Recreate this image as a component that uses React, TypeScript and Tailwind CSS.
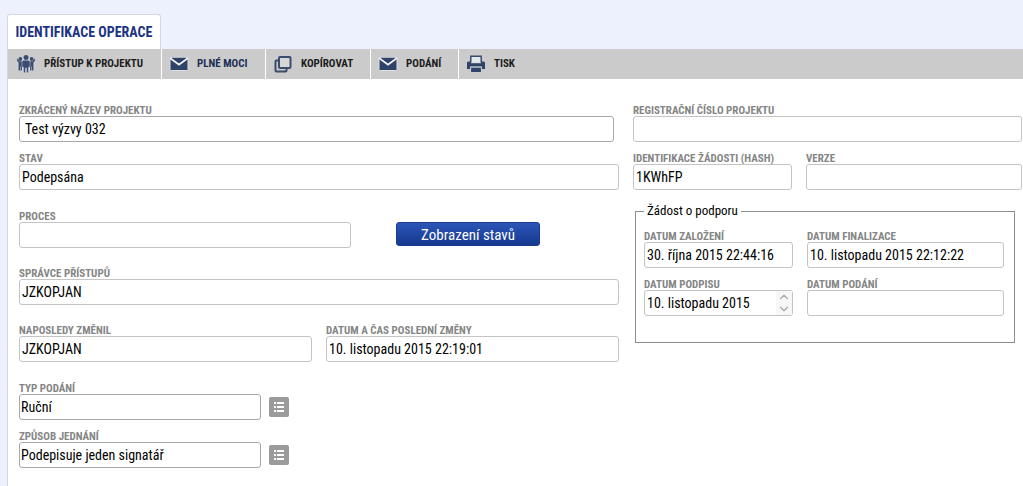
import { useId } from "react";
import { ChevronDown, ChevronUp } from "lucide-react";
import { clsx } from "clsx";

function PeopleIcon() {
    return (
        <svg viewBox="0 0 18 18" className="ml-px h-[18px] w-[18px] overflow-visible fill-[#3a4d6e]" aria-hidden="true">
            <path
                d="M3.200 3h11.600l2.800 2-.6 10.500h-4.500L12 18H6l-.5-2.500H1L.4 5Z"
                fill="#dcdfe4"
            />
            <circle cx="3.400" cy="4" r="1.900" />
            <circle cx="14.600" cy="4" r="1.900" />
            <path d="M.9 3.200-.2 5.400l1.700 2V15.600h1.500v-4h.5v4H5V6.200H2.200ZM17.100 3.200l1.100 2.200-1.700 2V15.600H15v-4h-.5v4H13V6.200h2.800Z" />
            <path
                d="M6.500 5.200h5q1.500 0 1.500 1.500v5.600h-1.400V17.800H9.400V13h-.8v4.800H6.400v-5.500H5V6.700q0-1.500 1.500-1.500Z"
                stroke="#dcdfe4"
                strokeWidth="0.500"
            />
            <circle cx="9" cy="2.600" r="2.500" />
        </svg>
    );
}

function MailIcon() {
    return (
        <svg viewBox="0 0 18 18" className="h-[18px] w-[18px] overflow-visible fill-[#2f4367]" aria-hidden="true">
            <rect y="2.500" width="18" height="13" rx="1" stroke="#dcdfe4" strokeWidth="1" />
            <path d="m0 3 9 6.500L18 3" fill="none" stroke="#eef1f6" strokeWidth="2" />
            <path d="M1.500 2.800h15L9 8.200Z" />
        </svg>
    );
}

function CopyIcon() {
    return (
        <svg viewBox="0 0 18 18" className="h-[18px] w-[18px]" fill="none" stroke="#3a4d6e" strokeWidth="2" aria-hidden="true">
            <path d="M5 5.500H2.500Q1.500 5.500 1.500 6.500V15.500q0 1 1 1H11.500q1 0 1-1V13" />
            <rect x="5" y="2" width="11.500" height="11" rx="1" fill="#d6d6d6" />
        </svg>
    );
}

function PrintIcon() {
    return (
        <svg viewBox="0 0 18 18" className="h-[18px] w-[18px] overflow-visible fill-[#2f4367]" aria-hidden="true">
            <path d="M3.800 7.500V1.200h10.400v6.300" fill="#e4e8ee" stroke="#3a4d6e" strokeWidth="1.500" />
            <path d="M1.400 6.500h2.400v1.700h10.400V6.500h2.400Q18 6.500 18 8v6h-3v-2.500H3V14H0V8q0-1.500 1.400-1.500Z" />
            <path d="M3.600 12.200h10.800v5.300H3.600Z" stroke="#dcdfe4" strokeWidth="0.800" />
        </svg>
    );
}

const toolbar = [
    { label: "PŘÍSTUP K PROJEKTU", icon: PeopleIcon, className: "w-[154px] text-[#1c1c1c]" },
    { label: "PLNÉ MOCI", icon: MailIcon, className: "w-[104px] text-[#1b2f55]" },
    { label: "KOPÍROVAT", icon: CopyIcon, className: "w-[105px] text-[#1c1c1c]" },
    { label: "PODÁNÍ", icon: MailIcon, className: "w-[88px] text-[#1c1c1c]" },
    { label: "TISK", icon: PrintIcon, className: "text-[#1c1c1c]" },
];

type FieldProps = {
    label: string;
    value?: string;
    className?: string;
    inputClassName?: string;
    spinner?: boolean;
};

function Field({ label, value = "", className, inputClassName = "border-[#c4c4c4] px-[2px]", spinner }: FieldProps) {
    const id = useId();

    return (
        <div className={clsx("min-w-0", className)}>
            <label htmlFor={id} className="block h-3 whitespace-nowrap text-[11px] leading-[14px] font-bold text-[#858585]">
                {label}
            </label>
            <div className="relative">
                <input
                    id={id}
                    type="text"
                    readOnly
                    defaultValue={value}
                    className={clsx(
                        "block h-[26px] w-full rounded-[3px] border bg-white text-sm leading-6 text-black outline-none",
                        inputClassName
                    )}
                />
                {spinner && (
                    <div className="absolute top-px right-px flex h-6 w-4 flex-col bg-[#f7f7f7] text-[#a8a8a8]">
                        <button type="button" aria-label="Nahoru" className="flex h-3 items-center justify-center">
                            <ChevronUp className="size-[14px] shrink-0" />
                        </button>
                        <button type="button" aria-label="Dolů" className="flex h-3 items-center justify-center">
                            <ChevronDown className="size-[14px] shrink-0" />
                        </button>
                    </div>
                )}
            </div>
        </div>
    );
}

function PickerField({ label, value, className }: FieldProps) {
    return (
        <div className={clsx("flex items-end gap-2", className)}>
            <Field label={label} value={value} className="w-[242px]" inputClassName="border-[#a8a8a8] px-px" />
            <button
                type="button"
                aria-label={`Vybrat: ${label}`}
                className="mb-[3px] flex h-5 w-5 items-center justify-center rounded-[2px] bg-[#9b9b9b]"
            >
                <svg viewBox="0 0 12 12" className="size-3 fill-white" aria-hidden="true">
                    <path d="M1 1h2v2H1zM4 1h7v2H4zM1 5h2v2H1zM4 5h7v2H4zM1 9h2v2H1zM4 9h7v2H4z" />
                </svg>
            </button>
        </div>
    );
}

export default function App() {
    return (
        <div className="min-h-screen bg-[#edf1fe] pt-[14px] pl-[7px] font-['Roboto_Condensed','Liberation_Sans_Narrow',Roboto,sans-serif]">
            {/* Tab */}
            <div className="flex">
                <h1 className="flex h-[35px] w-[154px] items-center justify-center rounded-t-[3px] border border-b-0 border-[#d5d8e2] bg-white text-sm font-bold whitespace-nowrap text-[#1c3383]">
                    IDENTIFIKACE OPERACE
                </h1>
            </div>

            <div className="min-h-[calc(100vh-49px)] border-l border-[#d5d8e2] bg-white">
                {/* Toolbar */}
                <div className="flex h-[30px] bg-[#cbcbcb]">
                    {toolbar.map(({ label, icon: Icon, className }) => (
                        <button
                            key={label}
                            type="button"
                            className={clsx(
                                "flex shrink-0 items-center gap-[9px] border-r border-white pl-2 text-[11px] font-bold whitespace-nowrap last:border-r-0",
                                className
                            )}
                        >
                            <Icon />
                            {label}
                        </button>
                    ))}
                </div>

                <form className="grid grid-cols-[600fr_389fr] gap-x-[14px] pt-[25px] pr-px pl-[11px]">
                    {/* Operation */}
                    <div className="min-w-0">
                        <Field label="ZKRÁCENÝ NÁZEV PROJEKTU" value="Test výzvy 032" className="mr-[5px]" inputClassName="border-[#a8a8a8] px-[5px]" />
                        <Field label="STAV" value="Podepsána" className="mt-[10px]" />
                        <div className="mt-5 flex items-end">
                            <Field label="PROCES" className="w-[332px]" />
                            <button
                                type="button"
                                className="mb-[2px] ml-[45px] h-6 w-36 rounded-[3px] border border-[#1c3c8e] bg-gradient-to-b from-[#2b56b8] to-[#17388f] text-[15px] leading-6 text-white"
                            >
                                Zobrazení stavů
                            </button>
                        </div>
                        <Field label="SPRÁVCE PŘÍSTUPŮ" value="JZKOPJAN" className="mt-[19px]" />
                        <div className="mt-[19px] grid grid-cols-2 gap-[14px]">
                            <Field label="NAPOSLEDY ZMĚNIL" value="JZKOPJAN" />
                            <Field label="DATUM A ČAS POSLEDNÍ ZMĚNY" value="10. listopadu 2015 22:19:01" />
                        </div>
                        <PickerField label="TYP PODÁNÍ" value="Ruční" className="mt-5" />
                        <PickerField label="ZPŮSOB JEDNÁNÍ" value="Podepisuje jeden signatář" className="mt-[10px]" />
                    </div>

                    {/* Project identification */}
                    <div className="min-w-0">
                        <Field label="REGISTRAČNÍ ČÍSLO PROJEKTU" />
                        <div className="mt-[10px] grid grid-cols-[159fr_216fr] gap-[14px]">
                            <Field label="IDENTIFIKACE ŽÁDOSTI (HASH)" value="1KWhFP" />
                            <Field label="VERZE" />
                        </div>
                        <fieldset className="mt-[14px] mr-[7px] ml-[2px] min-w-0 border border-[#8c8c8c] px-2 pb-[26px]">
                            <legend className="px-[3px] text-[13px] leading-[14px] text-black">Žádost o podporu</legend>
                            <div className="mr-[2px] grid grid-cols-[149fr_197fr] gap-x-[14px] gap-y-[10px] pt-3">
                                <Field label="DATUM ZALOŽENÍ" value="30. října 2015 22:44:16" />
                                <Field label="DATUM FINALIZACE" value="10. listopadu 2015 22:12:22" />
                                <Field label="DATUM PODPISU" value="10. listopadu 2015" spinner />
                                <Field label="DATUM PODÁNÍ" />
                            </div>
                        </fieldset>
                    </div>
                </form>
            </div>
        </div>
    );
}
